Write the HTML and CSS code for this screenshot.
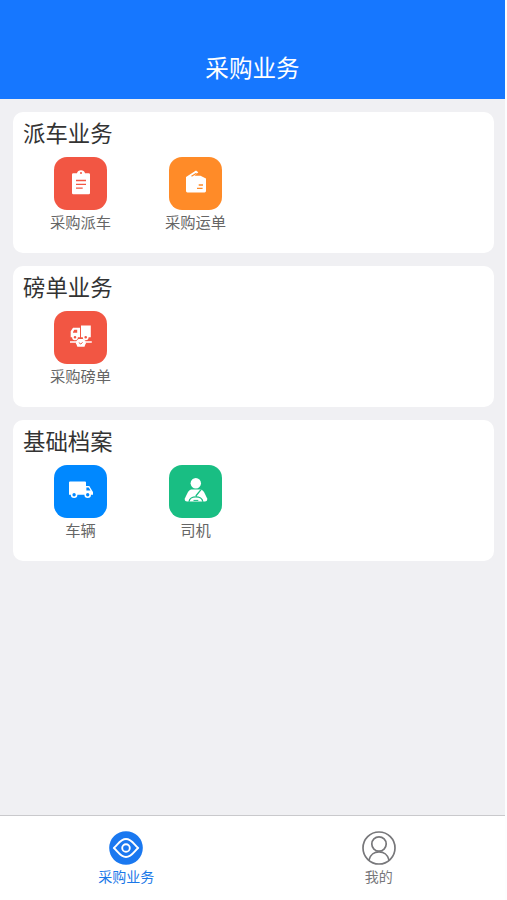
FILE: index.html
```html
<!DOCTYPE html>
<html lang="zh-CN">
<head>
<meta charset="utf-8">
<title>采购业务</title>
<link rel="stylesheet" href="styles.css">
</head>
<body>
<div class="app">
  <header class="header"><h1>采购业务</h1></header>
  <main class="content">
    <section class="card">
      <h2>派车业务</h2>
      <div class="grid">
        <a class="item">
          <svg class="tile red" viewBox="0 0 53 53">
            <path fill="#fff" d="M19.3 16.2H23C23.4 12.2 30.6 12.2 31 16.2H34.7Q36 16.2 36 17.5V36Q36 37.3 34.7 37.3H19.3Q18 37.3 18 36V17.5Q18 16.2 19.3 16.2Z"/>
            <circle class="cut" cx="27" cy="16" r="1"/>
            <path class="cut-line" d="M22 23.5H32M22 27.4H32M22 31.2H28.7"/>
          </svg>
          <span>采购派车</span>
        </a>
        <a class="item">
          <svg class="tile orange" viewBox="0 0 53 53">
            <path fill="#fff" d="M17 20L27 13.4L29.3 15.2L25.5 18.8H31.5L37 21.4V34Q37 35.4 35.6 35.4H18.4Q17 35.4 17 34Z"/>
            <path class="cut-line" d="M22.5 19.2L27.5 16.2"/>
            <path class="cut-line" d="M29.7 28H34M28 31.3H33.6"/>
          </svg>
          <span>采购运单</span>
        </a>
      </div>
    </section>
    <section class="card">
      <h2>磅单业务</h2>
      <div class="grid">
        <a class="item">
          <svg class="tile red" viewBox="0 0 53 53">
            <path fill="#fff" d="M27 14.5H36.8V26.2H27ZM16.7 20.3L19 16.8H26V26.2H16.7Z"/>
            <path class="cut" d="M19 21L20.3 18.8H23.2V21.8H19Z"/>
            <circle class="wheel" cx="21" cy="26.3" r="2.1"/>
            <circle class="wheel" cx="31.7" cy="26.3" r="2.1"/>
            <path stroke="#fff" stroke-width="1.6" d="M16 31H37.8"/>
            <path fill="#fff" d="M24.5 28H29.3Q32 29.5 31.8 32.3L30.5 35.8H23.4L22 32.3Q21.8 29.5 24.5 28Z"/>
            <path class="cut-line thin" d="M24.8 31.6L26.8 33L28.6 31.4"/>
          </svg>
          <span>采购磅单</span>
        </a>
      </div>
    </section>
    <section class="card">
      <h2>基础档案</h2>
      <div class="grid">
        <a class="item">
          <svg class="tile blue" viewBox="0 0 53 53">
            <path fill="#fff" d="M16 16.6H31Q32 16.6 32 17.6V21H35.3L38 25.5L39 27V29.7H15V17.6Q15 16.6 16 16.6Z"/>
            <path class="cut" d="M32.4 22.6H34.7L36.5 25.6H32.4Z"/>
            <circle class="wheel" cx="20.1" cy="29.7" r="2.5"/>
            <circle class="wheel" cx="33.7" cy="29.7" r="2.5"/>
          </svg>
          <span>车辆</span>
        </a>
        <a class="item">
          <svg class="tile green" viewBox="0 0 53 53">
            <circle fill="#fff" cx="26.8" cy="18.2" r="5.2"/>
            <path fill="#fff" d="M22 24.4H31.8Q34 25 35 27L38.2 33.6Q38.6 36.6 35.8 36.6H18.2Q15.2 36.6 15.8 33.6L19 27Q20 25 22 24.4Z"/>
            <path class="cut-line" d="M20 36.8C20.6 30.2 33.2 30.2 33.8 36.8M32 24.6L26.8 31"/>
            <path class="cut-line thin" d="M24.5 35.4H29.3"/>
          </svg>
          <span>司机</span>
        </a>
      </div>
    </section>
  </main>
  <nav class="tabs">
    <a class="tab active">
      <svg viewBox="0 0 34 34" fill="none">
        <circle cx="17" cy="17" r="16.8" fill="#1a78f0"/>
        <path stroke="#fff" stroke-width="1.9" stroke-linejoin="round" d="M4.8 17C8.5 14.2 11.2 8 17 8S25.5 14.2 29.2 17C25.5 19.8 22.8 26 17 26S8.5 19.8 4.8 17Z"/>
        <circle cx="17" cy="17" r="3.8" stroke="#fff" stroke-width="1.9"/>
      </svg>
      <span>采购业务</span>
    </a>
    <a class="tab">
      <svg viewBox="0 0 34 34" fill="none" stroke="#77777a" stroke-width="1.7">
        <circle cx="17" cy="17" r="16"/>
        <circle cx="17" cy="13" r="7.2"/>
        <path d="M7 29C9.5 18.2 24.5 18.2 27 29"/>
      </svg>
      <span>我的</span>
    </a>
  </nav>
</div>
</body>
</html>
```

FILE: styles.css
```css
* { box-sizing: border-box; }
body {
  margin: 0;
  background: #fff;
  font-family: "Noto Sans CJK SC", sans-serif;
}
.app {
  width: 507px;
  height: 900px;
  display: flex;
  flex-direction: column;
  border-right: 2px solid #fdfdfe;
  background: #f0f0f3;
}
.header {
  height: 99px;
  padding-top: 49px;
  background: #1677ff;
  color: #fff;
  text-align: center;
}
h1, h2 { margin: 0; font-weight: 400; }
h1 { font-size: 23.6px; line-height: 36px; }
.content {
  flex: 1;
  display: flex;
  flex-direction: column;
  gap: 13px;
  padding: 13px 11px 0 13px;
}
.card {
  height: 141px;
  padding: 3px 10px 0;
  border-radius: 10px;
  background: #fff;
}
h2 { font-size: 22.4px; line-height: 34px; color: #333; }
.grid { display: flex; margin-top: 8px; }
.item {
  width: 115px;
  display: flex;
  flex-direction: column;
  align-items: center;
  font-size: 15.3px;
  line-height: 22px;
  color: #666;
}
.tile { width: 53px; height: 53px; border-radius: 13px; fill: none; }
.red { background: #f25643; --tile: #f25643; }
.orange { background: #ff8b28; --tile: #ff8b28; }
.blue { background: #0088ff; --tile: #0088ff; }
.green { background: #19be83; --tile: #19be83; }
.cut { fill: var(--tile); }
.cut-line { stroke: var(--tile); stroke-width: 1.3; fill: none; }
.thin { stroke-width: 1; }
.wheel { fill: var(--tile); stroke: #fff; stroke-width: 1.6; }
.tabs {
  height: 85px;
  display: flex;
  border-top: 1px solid #c9c9cc;
  background: #fff;
}
.tab {
  flex: 1;
  display: flex;
  flex-direction: column;
  align-items: center;
  padding-top: 15px;
  font-size: 14px;
  line-height: 22px;
  color: #77777a;
}
.tab svg { width: 34px; height: 34px; }
.active { color: #1a78e8; }
```
